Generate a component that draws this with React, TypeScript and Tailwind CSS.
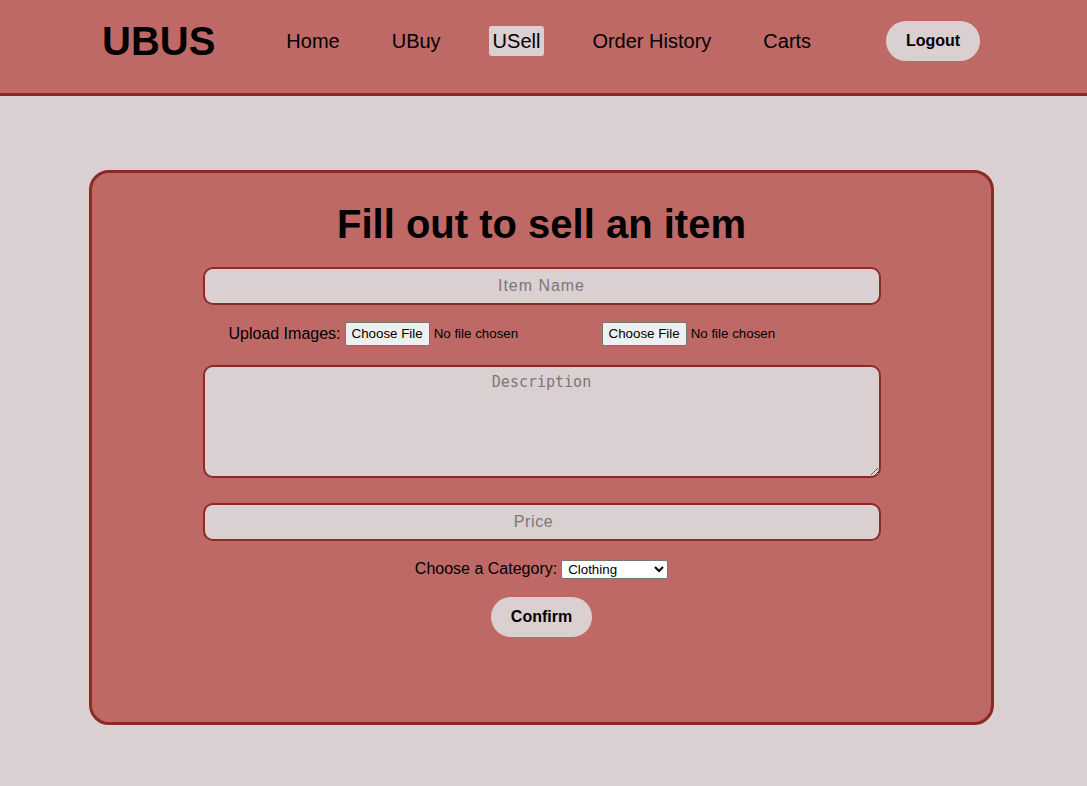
import { useState } from "react";

const links = ["Home", "UBuy", "USell", "Order History", "Carts"];

export default function App() {
  const [category, setCategory] = useState("Clothing");

  return (
    <div className="min-h-screen bg-[#dacfd1] font-['Liberation_Sans',Arial,sans-serif] text-black">
      {/* Header */}
      <header className="h-[96px] bg-[#bf6967] border-b-[3px] border-[#8c2a26] pt-[21px]">
        <div className="flex items-center h-[40px] pl-[102px]">
          <h1 className="text-[40px] font-bold leading-[46px]">UBUS</h1>
          <nav className="flex items-center gap-[44px] ml-[67px]">
            {links.map((l) => (
              <a
                key={l}
                href="#"
                className={`px-1 py-[3px] text-[20px] leading-[24px] rounded-[3px] ${
                  l === "USell" ? "bg-[#dacfd1]" : ""
                }`}
              >
                {l}
              </a>
            ))}
          </nav>
          <button className="ml-[71px] h-[40px] w-[94px] rounded-full bg-[#dacfd1] text-[16px] font-bold">
            Logout
          </button>
        </div>
      </header>

      {/* Sell form card */}
      <div className="pt-[74px]">
        <div className="ml-[89px] w-[905px] h-[555px] rounded-[20px] border-[3px] border-[#8c2a26] bg-[#bf6967] pt-[28px]">
          <h2 className="text-center text-[40px] font-bold leading-[46px]">Fill out to sell an item</h2>

          <div className="flex flex-col items-center mt-[20px]">
            <input
              placeholder="Item Name"
              className="w-[678px] h-[38px] rounded-[10px] border-2 border-[#8c2a26] bg-[#dacfd1] text-center text-[16px] tracking-[0.06em] placeholder:text-[#7f7677] outline-none"
            />

            <div className="flex items-center mt-[18px] h-[22px] text-[16px]">
              <span className="mr-[4px]">Upload Images:</span>
              <input
                type="file"
                className="w-[253px] text-[13.33px] font-['Liberation_Sans',Arial,sans-serif] file:mr-[4px] file:px-[6px] file:py-[1px] file:bg-[#efefef] file:border file:border-[#767676] file:rounded-[2px] file:text-[13.33px] file:text-black"
              />
              <input
                type="file"
                className="ml-[4px] w-[253px] text-[13.33px] font-['Liberation_Sans',Arial,sans-serif] file:mr-[4px] file:px-[6px] file:py-[1px] file:bg-[#efefef] file:border file:border-[#767676] file:rounded-[2px] file:text-[13.33px] file:text-black"
              />
            </div>

            <textarea
              placeholder="Description"
              className="mt-[20px] w-[678px] h-[113px] rounded-[10px] border-2 border-[#8c2a26] bg-[#dacfd1] text-center text-[15px] pt-[4px] font-['DejaVu_Sans_Mono','Liberation_Mono',monospace] placeholder:text-[#7f7677] outline-none"
            />

            <input
              placeholder="Price"
              className="mt-[25px] w-[678px] h-[38px] rounded-[10px] border-2 border-[#8c2a26] bg-[#dacfd1] text-center pr-[16px] text-[16px] tracking-[0.04em] placeholder:text-[#7f7677] outline-none"
            />

            <div className="flex items-center mt-[16px] text-[16px]">
              <label className="mr-[4px]">Choose a Category:</label>
              <select
                value={category}
                onChange={(e) => setCategory(e.target.value)}
                className="w-[107px] h-[19px] bg-white border border-[#767676] text-[13.33px] rounded-[2px] pl-[2px]"
              >
                <option>Clothing</option>
                <option>Electronics</option>
                <option>Books</option>
                <option>Furniture</option>
                <option>Other</option>
              </select>
            </div>

            <button className="mt-[16px] h-[40px] w-[101px] rounded-full bg-[#dacfd1] text-[16px] font-bold">
              Confirm
            </button>
          </div>
        </div>
      </div>
    </div>
  );
}
